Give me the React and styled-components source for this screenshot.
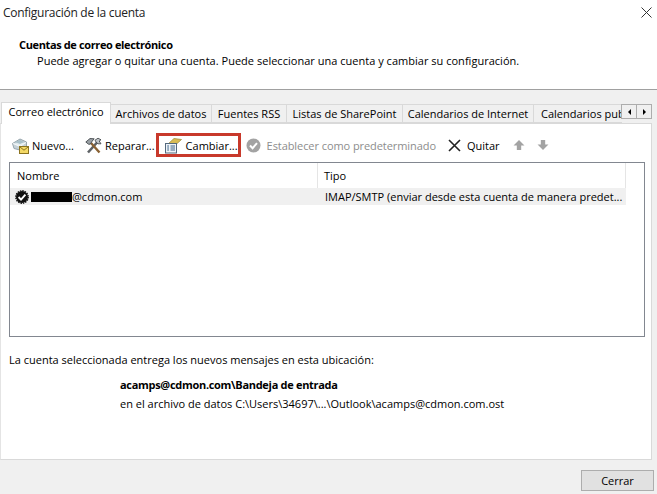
import React from 'react'
import styled, { createGlobalStyle } from 'styled-components'

const GlobalStyle = createGlobalStyle`
  html, body {
    margin: 0;
    padding: 0;
    background: #f0f0f0;
  }
  body {
    font-family: "Open Sans", "Noto Sans", sans-serif;
    font-size: 11px;
    color: #000;
  }
`

const Window = styled.div`
  width: 657px;
  height: 494px;
  display: flex;
  flex-direction: column;
  overflow: hidden;
  background: #f0f0f0;
`

const Header = styled.header`
  height: 90px;
  flex: none;
  box-sizing: border-box;
  background: #fff;
  border-bottom: 1px solid #a0a0a0;
  display: flex;
  flex-direction: column;
`

const TitleBar = styled.div`
  height: 25px;
  flex: none;
  padding-left: 3px;
  display: flex;
  align-items: center;
  justify-content: space-between;
  font-size: 12px;
  letter-spacing: -0.27px;
  color: #222;
`

const CloseGlyph = styled.svg`
  width: 11px;
  height: 11px;
  margin-right: 5px;
`

const HeaderTitle = styled.div`
  margin: 12px 0 0 19px;
  font-weight: 700;
  line-height: 15px;
  letter-spacing: -0.37px;
`

const HeaderText = styled.div`
  margin: 1px 0 0 37px;
  line-height: 16px;
  letter-spacing: 0.02px;
`

const Body = styled.div`
  flex: 1;
  padding-top: 12px;
  display: flex;
  flex-direction: column;
`

const TabStrip = styled.div`
  height: 21px;
  width: 652px;
  display: flex;
  align-items: flex-end;
  position: relative;
  z-index: 1;
`

const Tab = styled.div`
  box-sizing: border-box;
  width: ${p => p.$w}px;
  flex: none;
  height: ${p => (p.$active ? 22 : 19)}px;
  margin-left: ${p => (p.$active ? 1 : 0)}px;
  margin-bottom: ${p => (p.$active ? -1 : 0)}px;
  padding-left: ${p => (p.$clip ? 7 : 0)}px;
  text-align: ${p => (p.$clip ? 'left' : 'center')};
  background: ${p => (p.$active ? '#fff' : '#f0f0f0')};
  border: 1px solid #d9d9d9;
  border-left-width: ${p => (p.$active ? 1 : 0)}px;
  border-right-width: ${p => (p.$clip ? 0 : 1)}px;
  border-bottom-width: ${p => (p.$active ? 0 : 1)}px;
  line-height: 17px;
  white-space: nowrap;
  overflow: hidden;
`

const Scrollers = styled.div`
  display: flex;
  position: absolute;
  right: 0;
  top: 2px;
`

const ScrollBtn = styled.div`
  box-sizing: border-box;
  width: 16px;
  height: 15px;
  background: #f0f0f0;
  border: 1px solid #adadad;
  margin-left: -1px;
  display: flex;
  align-items: center;
  justify-content: center;
  &::before {
    content: '';
    border-top: 3px solid transparent;
    border-bottom: 3px solid transparent;
    border-left: ${p => (p.$dir === 'right' ? '3px solid #000' : 'none')};
    border-right: ${p => (p.$dir === 'left' ? '3px solid #000' : 'none')};
  }
`

const Panel = styled.div`
  box-sizing: border-box;
  width: 652px;
  height: 337px;
  background: #fff;
  border: 1px solid #d9d9d9;
  border-left-color: #e4e4e4;
  padding: 9px 6px 0 8px;
  display: flex;
  flex-direction: column;
`

const Toolbar = styled.div`
  height: 24px;
  display: flex;
  align-items: center;
`

const ToolButton = styled.div`
  display: flex;
  align-items: center;
  gap: ${p => p.$gap || 3}px;
  margin-left: ${p => p.$ml || 0}px;
  letter-spacing: ${p => (p.$disabled ? -0.07 : 0)}px;
  color: ${p => (p.$disabled ? '#8d8d8d' : '#000')};
  white-space: nowrap;
`

const Highlight = styled.div`
  box-sizing: border-box;
  height: 24px;
  width: 85px;
  margin-left: 1px;
  border: 3px solid #c8392b;
  display: flex;
  align-items: center;
  padding-left: 6px;
  gap: 4px;
  white-space: nowrap;
`

const Icon = styled.svg`
  width: ${p => p.$size || 17}px;
  height: ${p => p.$size || 17}px;
  flex: none;
`

const List = styled.div`
  box-sizing: border-box;
  margin-top: 5px;
  height: 175px;
  border: 1px solid #828790;
  padding-right: 18px;
`

const ListHead = styled.div`
  height: 25px;
  display: grid;
  grid-template-columns: 308px 1fr;
  align-items: stretch;
`

const HeadCell = styled.div`
  padding-left: ${p => p.$pl}px;
  line-height: 25px;
  border-right: 1px solid #e5e5e5;
`

const ListRow = styled.div`
  height: 17px;
  display: grid;
  grid-template-columns: 308px 1fr;
  align-items: center;
  background: #f0f0f0;
`

const NameCell = styled.div`
  display: flex;
  align-items: center;
  padding-left: 5px;
`

const TypeCell = styled.div`
  padding-left: 7px;
  white-space: nowrap;
`

const Redacted = styled.span`
  display: inline-block;
  width: 41px;
  height: 10px;
  margin-left: 2px;
  background: #000;
`

const Info = styled.div`
  margin-top: 14px;
  line-height: 18px;
`

const InfoDetail = styled.div`
  margin: 6px 0 0 111px;
  line-height: 19px;
`

const Bold = styled.div`
  font-weight: 700;
  letter-spacing: -0.3px;
`

const Footer = styled.footer`
  flex: 1;
  display: flex;
  justify-content: flex-end;
  align-items: flex-start;
  padding: 10px 3px 0 0;
`

const CloseButton = styled.div`
  box-sizing: border-box;
  width: 73px;
  height: 21px;
  background: #e1e1e1;
  border: 1px solid #adadad;
  text-align: center;
  line-height: 19px;
`

const NewIcon = () => (
  <Icon viewBox="0 0 17 17">
    <path d="M0.5 6.5 L8 2 L14.5 5 L14.5 9 L8 13 L2 11.5 Z" fill="#c6d2d8" stroke="#97a5ad" />
    <path d="M1 6.5 L8 9.5 L14 5.5" fill="#e6eef1" stroke="#f5f8f9" />
    <path d="M3 5 L8 3 L12 5 L8 7 Z" fill="#a9c1ca" />
    <rect x="7.5" y="9.5" width="9" height="7" fill="#f4d966" stroke="#8c7420" />
    <path d="M8 10 L12 13.2 L16 10" fill="none" stroke="#8c7420" />
  </Icon>
)

const RepairIcon = () => (
  <Icon viewBox="0 0 17 17">
    <path d="M3 15.5 L12 5.5" stroke="#5e6266" strokeWidth="2.6" />
    <path d="M14.5 15.5 L6 6" stroke="#8a6234" strokeWidth="2.4" />
    <path d="M0.8 5 L5 1.5 L9.2 1.8 L7.3 4 L5.2 7.2 L3.5 7.2 Z" fill="#9aa0a5" stroke="#34383c" strokeWidth="0.8" />
    <path d="M10 3.2 L13 1.2 L16 2.8 L14.2 4 L16 6.8 L13 6.8 L11 5 Z" fill="#c2c6ca" stroke="#34383c" strokeWidth="0.8" />
  </Icon>
)

const ChangeIcon = () => (
  <Icon viewBox="0 0 17 17">
    <path d="M3 7 L9 1.5 L16.5 2.5 L11 7.5 Z" fill="#d8bc55" stroke="#9a8530" strokeWidth="0.7" />
    <rect x="0.5" y="6.5" width="11" height="9.5" fill="#eef3f8" stroke="#54697d" />
    <path d="M2.2 9 H4 M5.5 9 H10 M2.2 11 H4 M5.5 11 H10 M2.2 13 H4 M5.5 13 H10" stroke="#3f6488" />
  </Icon>
)

const DefaultIcon = () => (
  <Icon $size={15} viewBox="0 0 15 15">
    <circle cx="7.5" cy="7.5" r="7" fill="#a3a3a3" />
    <path d="M4 7.5 L6.6 10.2 L11 5.2" fill="none" stroke="#fff" strokeWidth="2" />
  </Icon>
)

const RemoveIcon = () => (
  <Icon $size={13} viewBox="0 0 13 13">
    <path d="M1 1 L12 12 M12 1 L1 12" stroke="#222" strokeWidth="1.6" />
  </Icon>
)

const ArrowIcon = ({ down }) => (
  <Icon $size={12} viewBox="0 0 11 11">
    <path
      d={down ? 'M3.5 1 H7.5 V5 H10.5 L5.5 10 L0.5 5 H3.5 Z' : 'M3.5 10 H7.5 V6 H10.5 L5.5 1 L0.5 6 H3.5 Z'}
      fill="#a3a3a3"
    />
  </Icon>
)

const AccountIcon = () => (
  <Icon $size={14} viewBox="0 0 14 14">
    <circle cx="7" cy="7" r="6" fill="#111" />
    <circle cx="7" cy="7" r="6.2" fill="none" stroke="#111" strokeWidth="1.4" strokeDasharray="1.4 1" />
    <path d="M3.6 7 L6 9.6 L10.4 4.6" fill="none" stroke="#fff" strokeWidth="1.9" />
  </Icon>
)

const tabs = [
  { label: 'Archivos de datos', w: 101 },
  { label: 'Fuentes RSS', w: 75 },
  { label: 'Listas de SharePoint', w: 116 },
  { label: 'Calendarios de Internet', w: 131 },
  { label: 'Calendarios publicados', w: 88, clip: true },
]

const App = () => {
  return (
    <Window>
      <GlobalStyle />
      <Header>
        <TitleBar>
          Configuración de la cuenta
          <CloseGlyph viewBox="0 0 11 11">
            <path d="M0.5 0.5 L10.5 10.5 M10.5 0.5 L0.5 10.5" stroke="#333" strokeWidth="1" />
          </CloseGlyph>
        </TitleBar>
        <HeaderTitle>Cuentas de correo electrónico</HeaderTitle>
        <HeaderText>Puede agregar o quitar una cuenta. Puede seleccionar una cuenta y cambiar su configuración.</HeaderText>
      </Header>
      <Body>
        <TabStrip>
          <Tab $active $w={110}>Correo electrónico</Tab>
          {tabs.map(t => (
            <Tab key={t.label} $w={t.w} $clip={t.clip}>{t.label}</Tab>
          ))}
          <Scrollers>
            <ScrollBtn $dir="left" />
            <ScrollBtn $dir="right" />
          </Scrollers>
        </TabStrip>
        <Panel>
          <Toolbar>
            <ToolButton $ml={3}><NewIcon />Nuevo...</ToolButton>
            <ToolButton $ml={11}><RepairIcon />Reparar...</ToolButton>
            <Highlight><ChangeIcon />Cambiar...</Highlight>
            <ToolButton $ml={5} $gap={6} $disabled><DefaultIcon />Establecer como predeterminado</ToolButton>
            <ToolButton $ml={12} $gap={6}><RemoveIcon />Quitar</ToolButton>
            <ToolButton $ml={13}><ArrowIcon /></ToolButton>
            <ToolButton $ml={12}><ArrowIcon down /></ToolButton>
          </Toolbar>
          <List>
            <ListHead>
              <HeadCell $pl={7}>Nombre</HeadCell>
              <HeadCell $pl={6}>Tipo</HeadCell>
            </ListHead>
            <ListRow>
              <NameCell>
                <AccountIcon />
                <Redacted />@cdmon.com
              </NameCell>
              <TypeCell>IMAP/SMTP (enviar desde esta cuenta de manera predet...</TypeCell>
            </ListRow>
          </List>
          <Info>La cuenta seleccionada entrega los nuevos mensajes en esta ubicación:</Info>
          <InfoDetail>
            <Bold>acamps@cdmon.com\Bandeja de entrada</Bold>
            <div>en el archivo de datos C:\Users\34697\...\Outlook\acamps@cdmon.com.ost</div>
          </InfoDetail>
        </Panel>
        <Footer>
          <CloseButton>Cerrar</CloseButton>
        </Footer>
      </Body>
    </Window>
  )
}

export default App
